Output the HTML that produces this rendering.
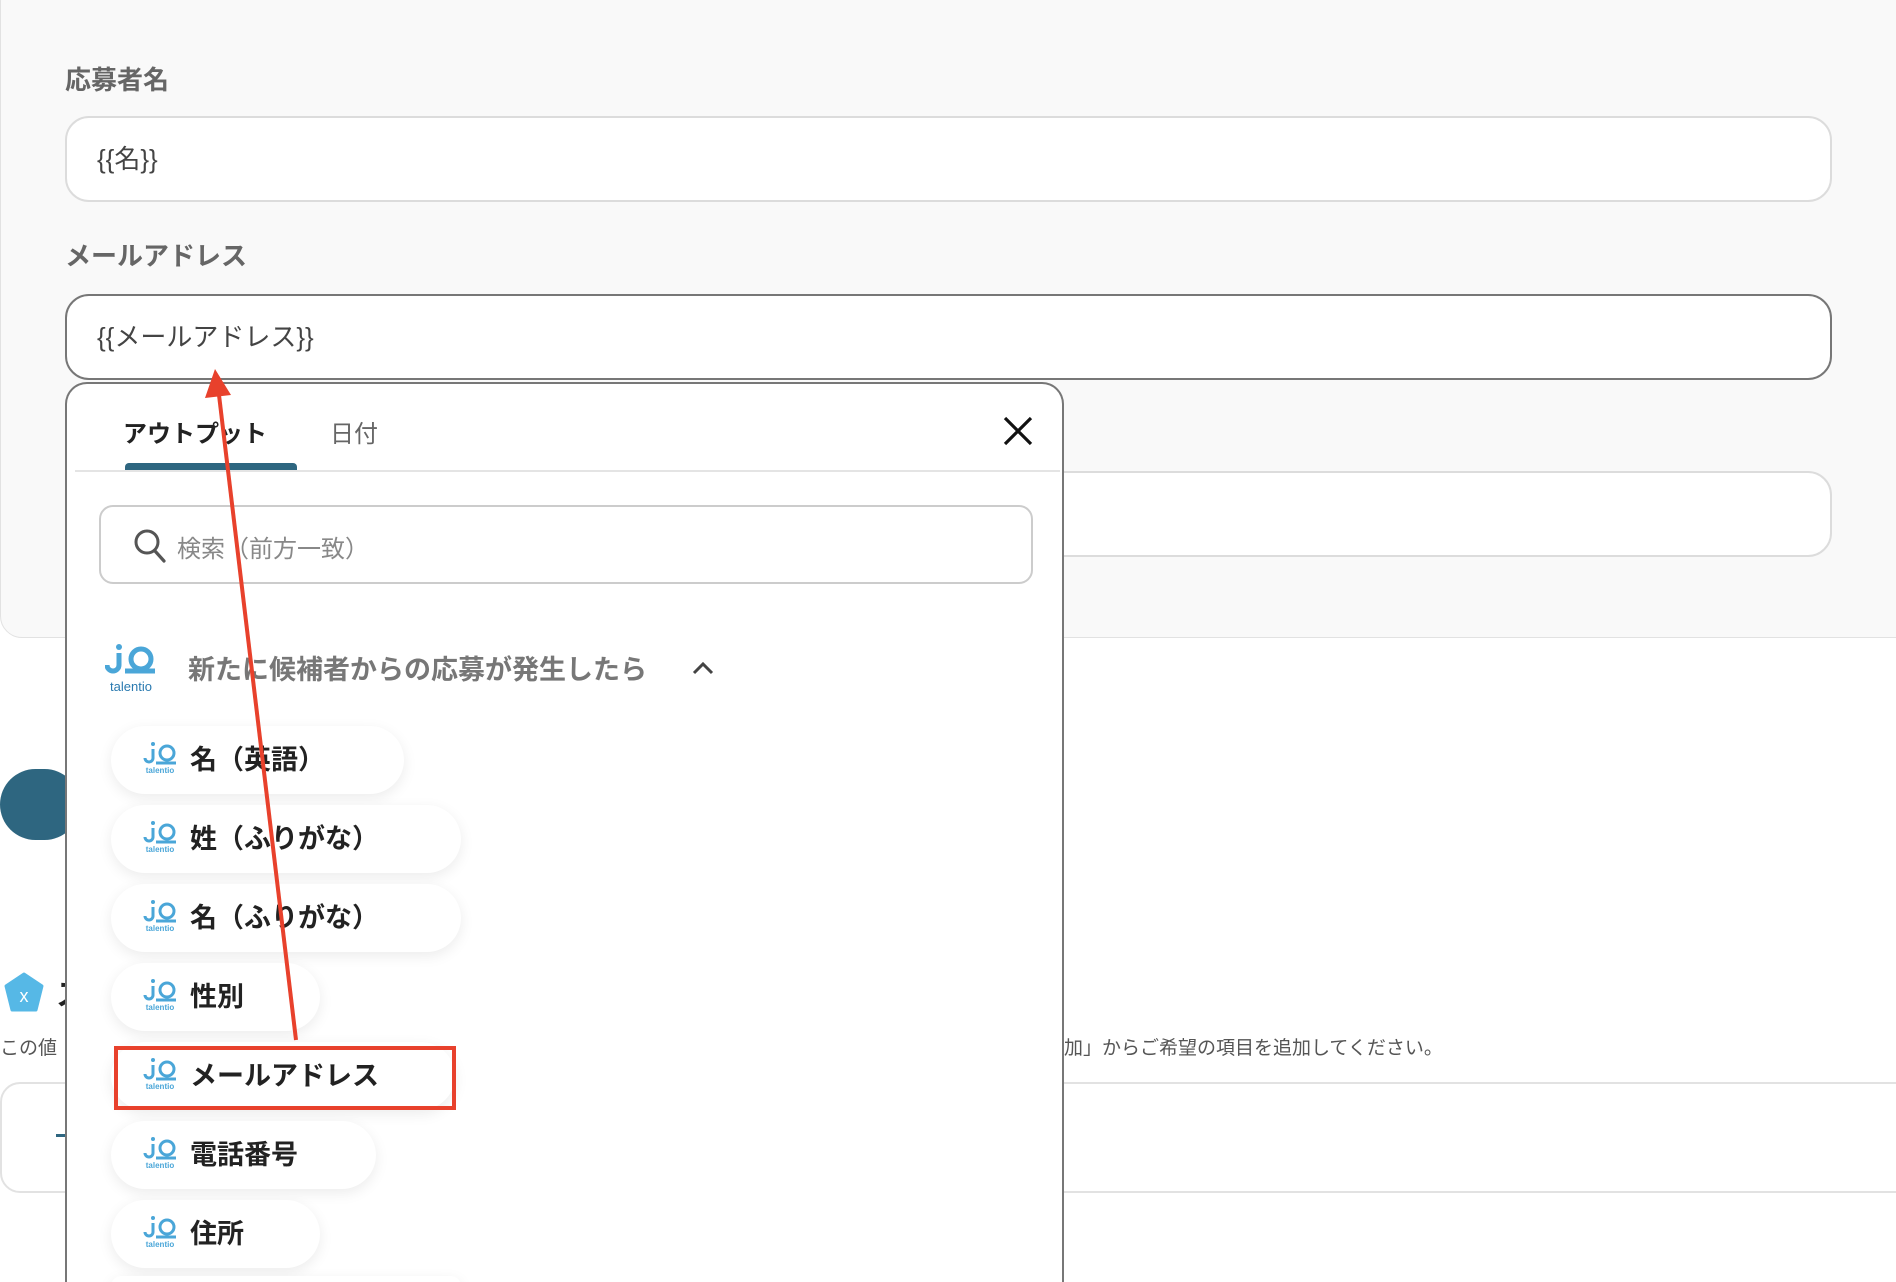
<!DOCTYPE html>
<html style="width:1896px;height:1282px;overflow:hidden"><head><meta charset="utf-8"><style>
*{box-sizing:border-box;margin:0;padding:0}
body{width:1896px;height:1282px;overflow:hidden;background:#fff;font-family:"Liberation Sans","Noto Sans CJK JP",sans-serif;position:relative}
.abs{position:absolute}
.card{left:0;top:-20px;width:1920px;height:658px;background:#f9f9f9;border:1px solid #e2e2e2;border-radius:22px}
.lbl{font-size:26px;font-weight:bold;color:#666;left:65px}
.inp{left:65px;width:1767px;height:86px;background:#fff;border:2px solid #dcdcdc;border-radius:24px;font-size:26px;color:#444;padding:0 0 0 30px;line-height:82px}
.pop{left:65px;top:382px;width:999px;height:900px;background:#fff;border:2px solid #777;border-bottom:none;border-radius:22px 22px 0 0}
.pill{left:111px;height:68px;background:#fff;border-radius:34px;box-shadow:0 4px 14px rgba(0,0,0,.08);font-size:27px;font-weight:bold;color:#222;line-height:68px;padding-left:79px}
.ic{position:absolute;left:32px;top:14px;width:34px;height:40px}
</style></head><body>
<div class="abs card"></div>
<div class="abs lbl" style="top:60px">応募者名</div>
<div class="abs inp" style="top:116px">{{名}}</div>
<div class="abs lbl" style="top:236px">メールアドレス</div>
<div class="abs inp" style="top:294px;border-color:#777">{{メールアドレス}}</div>
<div class="abs inp" style="top:471px"></div>

<div class="abs" style="left:0;top:769px;width:80px;height:71px;background:#2e6680;border-radius:36px"></div>
<svg class="abs" style="left:4px;top:972px" width="40" height="42" viewBox="0 0 40 42"><path d="M20 2 L38 14 L32 38 L8 38 L2 14 Z" fill="#56b8e6" stroke="#56b8e6" stroke-width="3" stroke-linejoin="round"/><text x="20" y="30" font-size="18" fill="#fff" text-anchor="middle" font-family="Liberation Sans">x</text></svg>
<div class="abs" style="left:56px;top:970px;font-size:30px;font-weight:bold;color:#222">ス</div>
<div class="abs" style="left:0;top:1033px;font-size:19px;color:#555">この値</div>
<div class="abs" style="left:1064px;top:1033px;font-size:19px;color:#555">加」からご希望の項目を追加してください。</div>
<div class="abs" style="left:0;top:1082px;width:1920px;height:111px;border:2px solid #e2e2e2;border-radius:20px;background:#fff"></div>
<div class="abs" style="left:56px;top:1134px;width:14px;height:3px;background:#2e6680"></div>

<div class="abs pop">
 <div class="abs" style="left:56px;top:30px;font-size:24px;font-weight:bold;color:#222">アウトプット</div>
 <div class="abs" style="left:263px;top:30px;font-size:24px;color:#666">日付</div>
 <div class="abs" style="left:58px;top:79px;width:172px;height:8px;background:#2e6680;border-radius:4px 4px 0 0"></div>
 <div class="abs" style="left:8px;top:86px;width:985px;height:2px;background:#e4e4e4"></div>
 <svg class="abs" style="left:935px;top:31px" width="32" height="32" viewBox="0 0 32 32"><path d="M3 3L29 29M29 3L3 29" stroke="#111" stroke-width="3.2"/></svg>
 <div class="abs" style="left:32px;top:121px;width:934px;height:79px;border:2px solid #ccc;border-radius:14px"></div>
 <svg class="abs" style="left:66px;top:144px" width="34" height="36" viewBox="0 0 34 36"><circle cx="14" cy="14" r="11" fill="none" stroke="#555" stroke-width="3"/><path d="M22 23L31 33" stroke="#555" stroke-width="3.2" stroke-linecap="round"/></svg>
 <div class="abs" style="left:110px;top:145px;font-size:24px;color:#888">検索（前方一致）</div>
 <svg class="abs" style="left:38px;top:257px" width="54" height="52" viewBox="0 0 54 52"><circle cx="14" cy="6" r="3" fill="#4aa6d8"/><path d="M14 12v12a6 6 0 0 1-12 0" fill="none" stroke="#4aa6d8" stroke-width="5"/><circle cx="36" cy="18" r="10" fill="none" stroke="#4aa6d8" stroke-width="5"/><path d="M20 30h30" stroke="#4aa6d8" stroke-width="5"/><text x="26" y="50" font-size="13" fill="#2a7ab0" text-anchor="middle" font-family="Liberation Sans">talentio</text></svg>
 <div class="abs" style="left:121px;top:264px;font-size:27px;font-weight:bold;color:#777">新たに候補者からの応募が発生したら</div>
 <svg class="abs" style="left:624px;top:276px" width="24" height="16" viewBox="0 0 24 16"><path d="M3 13L12 4L21 13" fill="none" stroke="#444" stroke-width="3"/></svg>
</div>

<div class="abs pill" style="top:726px;width:293px"><svg class="ic" viewBox="0 0 34 40"><circle cx="10" cy="4" r="2" fill="#4aa6d8"/><path d="M10 9v9a4 4 0 0 1-8 0" fill="none" stroke="#4aa6d8" stroke-width="3"/><circle cx="24" cy="13" r="7" fill="none" stroke="#4aa6d8" stroke-width="3"/><path d="M13 23h20" stroke="#4aa6d8" stroke-width="3"/><text x="17" y="33" font-size="8" fill="#4aa6d8" text-anchor="middle">talentio</text></svg>名（英語）</div>
<div class="abs pill" style="top:805px;width:350px"><svg class="ic" viewBox="0 0 34 40"><circle cx="10" cy="4" r="2" fill="#4aa6d8"/><path d="M10 9v9a4 4 0 0 1-8 0" fill="none" stroke="#4aa6d8" stroke-width="3"/><circle cx="24" cy="13" r="7" fill="none" stroke="#4aa6d8" stroke-width="3"/><path d="M13 23h20" stroke="#4aa6d8" stroke-width="3"/><text x="17" y="33" font-size="8" fill="#4aa6d8" text-anchor="middle">talentio</text></svg>姓（ふりがな）</div>
<div class="abs pill" style="top:884px;width:350px"><svg class="ic" viewBox="0 0 34 40"><circle cx="10" cy="4" r="2" fill="#4aa6d8"/><path d="M10 9v9a4 4 0 0 1-8 0" fill="none" stroke="#4aa6d8" stroke-width="3"/><circle cx="24" cy="13" r="7" fill="none" stroke="#4aa6d8" stroke-width="3"/><path d="M13 23h20" stroke="#4aa6d8" stroke-width="3"/><text x="17" y="33" font-size="8" fill="#4aa6d8" text-anchor="middle">talentio</text></svg>名（ふりがな）</div>
<div class="abs pill" style="top:963px;width:209px"><svg class="ic" viewBox="0 0 34 40"><circle cx="10" cy="4" r="2" fill="#4aa6d8"/><path d="M10 9v9a4 4 0 0 1-8 0" fill="none" stroke="#4aa6d8" stroke-width="3"/><circle cx="24" cy="13" r="7" fill="none" stroke="#4aa6d8" stroke-width="3"/><path d="M13 23h20" stroke="#4aa6d8" stroke-width="3"/><text x="17" y="33" font-size="8" fill="#4aa6d8" text-anchor="middle">talentio</text></svg>性別</div>
<div class="abs pill" style="top:1042px;width:344px"><svg class="ic" viewBox="0 0 34 40"><circle cx="10" cy="4" r="2" fill="#4aa6d8"/><path d="M10 9v9a4 4 0 0 1-8 0" fill="none" stroke="#4aa6d8" stroke-width="3"/><circle cx="24" cy="13" r="7" fill="none" stroke="#4aa6d8" stroke-width="3"/><path d="M13 23h20" stroke="#4aa6d8" stroke-width="3"/><text x="17" y="33" font-size="8" fill="#4aa6d8" text-anchor="middle">talentio</text></svg>メールアドレス</div>
<div class="abs pill" style="top:1121px;width:265px"><svg class="ic" viewBox="0 0 34 40"><circle cx="10" cy="4" r="2" fill="#4aa6d8"/><path d="M10 9v9a4 4 0 0 1-8 0" fill="none" stroke="#4aa6d8" stroke-width="3"/><circle cx="24" cy="13" r="7" fill="none" stroke="#4aa6d8" stroke-width="3"/><path d="M13 23h20" stroke="#4aa6d8" stroke-width="3"/><text x="17" y="33" font-size="8" fill="#4aa6d8" text-anchor="middle">talentio</text></svg>電話番号</div>
<div class="abs pill" style="top:1200px;width:209px"><svg class="ic" viewBox="0 0 34 40"><circle cx="10" cy="4" r="2" fill="#4aa6d8"/><path d="M10 9v9a4 4 0 0 1-8 0" fill="none" stroke="#4aa6d8" stroke-width="3"/><circle cx="24" cy="13" r="7" fill="none" stroke="#4aa6d8" stroke-width="3"/><path d="M13 23h20" stroke="#4aa6d8" stroke-width="3"/><text x="17" y="33" font-size="8" fill="#4aa6d8" text-anchor="middle">talentio</text></svg>住所</div>
<div class="abs pill" style="top:1276px;width:350px;height:20px"></div>

<div class="abs" style="left:114px;top:1046px;width:342px;height:64px;border:4px solid #e8412c"></div>
<svg class="abs" style="left:0;top:0" width="1896" height="1282"><path d="M296 1040L219 395" stroke="#e8412c" stroke-width="4"/><path d="M215 369L205 398L231 395Z" fill="#e8412c"/></svg>
</body></html>
